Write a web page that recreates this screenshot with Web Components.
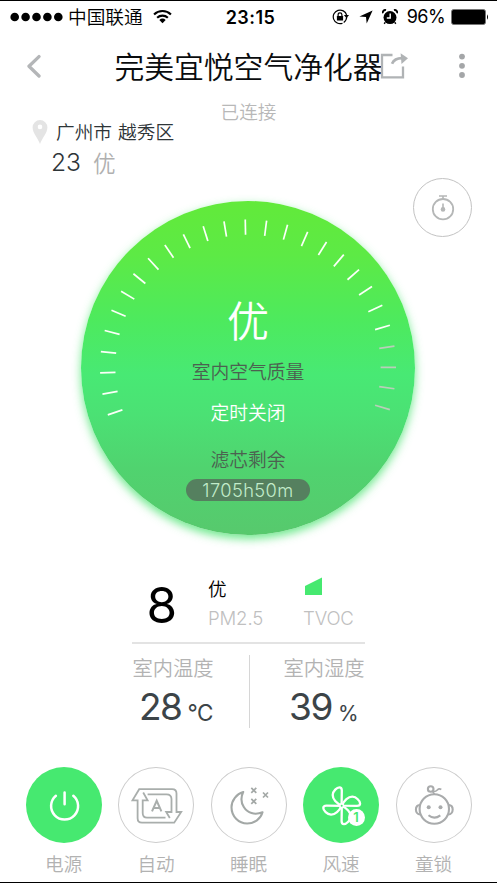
<!DOCTYPE html>
<html lang="zh-CN">
<head>
<meta charset="utf-8">
<title>完美宜悦空气净化器</title>
<style>
html,body{margin:0;padding:0;background:#fff}
body{font-family:Inter,"Noto Sans CJK SC",sans-serif;font-weight:350;width:497px;height:883px;overflow:hidden}
</style>
</head>
<body>
<purifier-app></purifier-app>
<script>
const define = (name, html, after) => {
  const tpl = document.createElement('template');
  tpl.innerHTML = '<style>*{box-sizing:border-box}svg{display:block;flex:none}</style>' + html;
  customElements.define(name, class extends HTMLElement {
    connectedCallback() {
      if (this.shadowRoot) return;
      this.attachShadow({mode: 'open'}).append(tpl.content.cloneNode(true));
      if (after) after(this, this.shadowRoot);
    }
  });
};

define('status-bar', `
<style>
:host{display:grid;grid-template-columns:1fr auto 1fr;align-items:center;height:33px;border-top:1px solid #000;padding:0 8px 0 10px;color:#000}
.l,.r{display:flex;align-items:center}
.r{justify-content:flex-end}
.c{font-size:18.7px;line-height:24px;white-space:nowrap;margin:1px 0 0 5px}
.t{font-size:18px;font-weight:600;letter-spacing:.45px;line-height:24px;margin:1px 0 0 2px}
.p{font-size:18px;line-height:24px;letter-spacing:-.6px;font-weight:400}
</style>
<div class="l">
<svg width="53" height="10" viewBox="0 0 53 10"><g fill="#000"><circle cx="4.700" cy="5" r="4.300"/><circle cx="15.600" cy="5" r="4.300"/><circle cx="26.500" cy="5" r="4.300"/><circle cx="37.400" cy="5" r="4.300"/><circle cx="48.300" cy="5" r="4.300"/></g></svg>
<span class="c">中国联通</span>
<svg style="margin:-2px 0 0 10px" width="19" height="15" viewBox="0 0 20 16" fill="none" stroke="#000" stroke-width="2.300"><path d="M1 5.800a13 13 0 0 1 18 0M4.300 9.300a8.300 8.300 0 0 1 11.400 0"/><path d="M10 15.200L6.600 11.700a5 5 0 0 1 6.800 0z" fill="#000" stroke="none"/></svg>
</div>
<span class="t">23:15</span>
<div class="r">
<svg width="17" height="16" viewBox="0 0 17 16"><path d="M10.500 14.200A6.800 6.800 0 1 1 14.600 6" fill="none" stroke="#000" stroke-width="1.200"/><path d="M14.700 8a6.800 6.800 0 0 1-3 5.400" fill="none" stroke="#000" stroke-width="1.200"/><path d="M11.900 6h5.100l-2.500 3.300z"/><rect x="4.900" y="7" width="6.200" height="4.600" rx=".5"/><path d="M6.100 7.400V5.800a1.900 1.900 0 0 1 3.800 0v1.600" fill="none" stroke="#000" stroke-width="1.200"/></svg>
<svg style="margin-left:10px" width="14" height="14" viewBox="0 0 14 14"><path d="M13.600.4L7.700 13.600 7 7 .4 6.400z"/></svg>
<svg style="margin-left:9px" width="16" height="16" viewBox="0 0 16 16"><circle cx="8" cy="8.600" r="6.500"/><path d="M.9 4.200A2.400 2.400 0 0 1 4 1.200M15.100 4.200A2.400 2.400 0 0 0 12 1.200" fill="none" stroke="#000" stroke-width="1.800"/><path d="M3.200 13.400l-1 1.300M12.800 13.400l1 1.300" stroke="#000" stroke-width="1.500"/><path d="M8.200 4.600V9H4.800" stroke="#fff" stroke-width="1.400" fill="none"/></svg>
<span class="p" style="margin-left:9px">96%</span>
<svg style="margin-left:6px" width="38" height="16" viewBox="0 0 38 16"><rect x=".5" y=".5" width="34" height="15" rx="2.200" fill="#000" stroke="#777"/><path d="M36 5.200q2 2.800 0 5.600z"/></svg>
</div>`);

define('nav-bar', `
<style>
:host{display:grid;grid-template-columns:1fr;height:66px;align-items:center;color:#0a0c0e}
h1{grid-area:1/1;margin:1px 0 0;text-align:center;font-size:29.8px;line-height:40px;font-weight:350;white-space:nowrap}
.i{grid-area:1/1;display:flex;align-items:center;justify-content:space-between;padding:0 31px 0 26px}
.g{display:flex;align-items:center;gap:49px}
</style>
<h1><slot></slot></h1>
<div class="i">
<svg width="16" height="24" viewBox="0 0 16 24"><path d="M13 2.600L3 12.300l10 9.700" fill="none" stroke="#b4b6b8" stroke-width="3.300" stroke-linecap="round" stroke-linejoin="round"/></svg>
<div class="g">
<svg width="29" height="26" viewBox="0 0 29 26" fill="none" stroke="#b0b3b5" stroke-width="2.300"><path d="M12.500 2H2v22.400h21V13.500"/><path d="M12 10.800C13.500 7.500 17 5.200 22 5.200" stroke-width="2.700"/><path d="M20.600.2L28 5.200l-6.500 5.800z" fill="#b0b3b5" stroke="none"/></svg>
<svg width="8" height="26" viewBox="0 0 8 26" fill="#a4a6a8"><circle cx="4" cy="3.600" r="2.900"/><circle cx="4" cy="12.800" r="2.900"/><circle cx="4" cy="22" r="2.900"/></svg>
</div></div>`);

define('location-info', `
<style>
:host{display:block;color:#2e3538}
.s{text-align:center;color:#b8b8b8;font-size:18.6px;line-height:24px}
.p{display:flex;align-items:center;padding-left:32px;height:24px;margin-top:-4px}
.p span{font-size:18.7px;line-height:24px;margin:1px 0 0 8px;word-spacing:.8px}
.q{display:flex;align-items:center;padding-left:51px;height:32px;margin-top:2px;font-size:24.6px}
.q b{font-weight:350}
.q i{font-style:normal;color:#b0b0b0;font-size:22.6px;margin-left:12px}
</style>
<div class="s">已连接</div>
<div class="p"><svg width="16" height="24" viewBox="0 0 16 24"><path fill-rule="evenodd" d="M8 24C6.200 18.500.6 13 .6 7.500A7.400 7.400 0 0 1 15.400 7.500C15.400 13 9.800 18.500 8 24zM8 4.600a2.300 2.300 0 1 0 0 4.600a2.300 2.300 0 0 0 0-4.600z" fill="#e4e4e4"/></svg><span>广州市 越秀区</span></div>
<div class="q"><b>23</b><i>优</i></div>`);

define('timer-button', `
<style>:host{display:grid;place-items:center;width:59px;height:59px;border:1.2px solid #c3c3c3;border-radius:50%;background:#fff}</style>
<svg width="24" height="26" viewBox="0 0 24 26" fill="none" stroke="#b5b7b7" stroke-width="1.800"><circle cx="12" cy="14.200" r="10.200"/><path d="M8 1h8M12 1v3M12 8.500v6" stroke-width="1.600"/><circle cx="12" cy="14.400" r="2.300" fill="#b5b7b7" stroke="none"/></svg>`);

define('air-dial', `
<style>
:host{display:grid;width:334px;height:334px;border-radius:50%;background:linear-gradient(180deg,#62ea3a 0%,#5dea45 16%,#4dea5e 36%,#48e974 52%,#4be174 64%,#50d36f 80%,#57c96d 100%);box-shadow:0 4px 10px rgba(75,228,112,.8)}
.k,.t{grid-area:1/1}
.t{display:flex;flex-direction:column;align-items:center;white-space:nowrap;color:#fff;font-size:18.8px;line-height:26px;padding-top:92px}
.g{font-size:42px;line-height:58px}
.d{color:#4c6150}
.v{width:124px;height:22px;border-radius:11px;background:#55805f;color:#c2ecca;font-size:18.3px;line-height:22px;text-align:center;letter-spacing:.4px}
</style>
<svg class="k" width="334" height="334" viewBox="0 0 334 334"></svg>
<div class="t"><div class="g">优</div><div class="d" style="margin-top:9px">室内空气质量</div><div style="margin-top:15px">定时关闭</div><div class="d" style="margin-top:21px">滤芯剩余</div><div class="v" style="margin-top:5px">1705h50m</div></div>`,
(el, root) => {
  const svg = root.querySelector('.k');
  for (let i = 0; i < 27; i++) {
    const l = document.createElementNS('http://www.w3.org/2000/svg', 'line');
    const a = (-198.7 + i * 8.28) * Math.PI / 180, x = Math.cos(a), y = Math.sin(a);
    l.setAttribute('x1', 167 + 132.6 * x); l.setAttribute('y1', 166.4 + 132.6 * y);
    l.setAttribute('x2', 167 + 148 * x); l.setAttribute('y2', 166.4 + 148 * y);
    l.setAttribute('stroke', i < 23 ? '#fbfff8' : '#b9ceb9');
    l.setAttribute('stroke-width', '1.7');
    svg.append(l);
  }
});

define('air-readings', `
<style>
:host{display:flex;width:233px;height:67px;border-bottom:2px solid #e3e3e3;color:#000}
.n{width:76px;padding-left:14.5px;font-size:49.5px;line-height:56px;font-weight:400}
.c{font-size:18.6px;line-height:26px;color:#c0c0c0;letter-spacing:-.15px}
.c p{margin:0;height:26px}
.c .b{color:#000;line-height:25px}
</style>
<div class="n">8</div>
<div class="c" style="width:95px"><p class="b">优</p><p style="margin-top:2px">PM2.5</p></div>
<div class="c"><p><svg width="19" height="19" viewBox="0 0 19 19"><path d="M2 9L19 .6v17.400H2z" fill="#46e970"/></svg></p><p style="margin-top:2px">TVOC</p></div>`);

define('climate-value', `
<style>
:host{display:flex;flex-direction:column;align-items:center;width:84px;color:#3c4448}
.l{font-size:20.3px;line-height:28px;color:#b3b3b3;white-space:nowrap}
.v{display:flex;align-items:baseline;font-size:37px;line-height:44px;margin:2px 0 0 6px;letter-spacing:-1.4px;white-space:nowrap;font-weight:380}
.v small{font-size:22.5px;margin-left:6px;letter-spacing:-.5px;position:relative;top:1px}
:host([unit="%"]) .v{margin-left:-1px}
:host([unit="%"]) small{font-size:21px}
</style>
<div class="l"><slot></slot></div><div class="v"><span></span><small></small></div>`,
(el, r) => { r.querySelector('span').textContent = el.getAttribute('value'); r.querySelector('small').textContent = el.getAttribute('unit'); });

const blade = 'M38.600 38.300C33.500 36.500 29.600 32 29.700 28C29.900 24 34 20.300 36.400 20.300Q38.800 20.300 38.800 23.500z';
const icons = {
  power: '<g stroke="#fff" stroke-width="2.500" stroke-linecap="round"><path d="M29.900 28.700a13.500 13.500 0 1 0 17.400 0M38.600 25.600v11.600"/></g>',
  auto: '<g stroke="#a9aeac" stroke-width="1.800" stroke-linejoin="miter"><path d="M19.600 33.300H14.500L21.200 22.200H54.100Q58.500 22.200 58.500 26.600V45H63.200L56.200 55.700H24Q19.600 55.700 19.600 51.300z"/><path d="M29.600 27.300H48.500Q53.500 27.300 53.500 32V45H48.200L51.800 51M25.200 25.500L29.600 33.300H24.700V46Q24.700 50.700 29 50.700H47.500"/><path d="M34 44.300L38.700 33.800L43.400 44.300M35.700 41h6" stroke-width="2"/></g>',
  sleep: '<g stroke="#a3a8a6" stroke-width="2.100" stroke-linejoin="round"><path d="M32.200 25C25.500 27 20.500 33.300 20.500 40.300C20.500 49.300 27.500 56.500 36.200 56.500C43.500 56.500 49.700 52 51.500 45.300C43.500 48.500 36.500 46 32.800 40C30 35.500 29.800 30 32.200 25z"/><path stroke-width="1.700" d="M40.300 20.800l5 5m0-5l-5 5M52 25.500l5 5m0-5l-5 5M40.300 31.800l5 5m0-5l-5 5"/></g>',
  fan: '<g stroke="#fff" stroke-width="2.300" stroke-linejoin="round">' + [0, 90, 180, 270].map(a => `<path transform="rotate(${a} 38.7 38.7)" d="${blade}"/>`).join('') + '</g><circle cx="38.700" cy="38.700" r="2.400" fill="#fff"/><circle cx="38.700" cy="38.700" r="1" fill="#46e970"/>',
  child: '<g stroke="#a9abac" stroke-width="2.100"><circle cx="38.300" cy="42" r="14.700"/><path d="M24 38C18.500 37.500 18.500 47.500 24.300 47.500M52.600 38C58.100 37.500 58.100 47.500 52.300 47.500M32.500 48.300Q38.300 53 44.300 48.300"/><circle cx="34.700" cy="22" r="2.800"/><path d="M36.500 24.300Q39.500 25 41.300 23T45.300 22.500M36.500 24.500Q38 26 38.500 27.500" stroke-width="1.700"/></g><circle cx="32.700" cy="40.200" r="2" fill="#a9abac"/><circle cx="44.500" cy="40.200" r="2" fill="#a9abac"/>'
};
define('mode-button', `
<style>
:host{display:flex;flex-direction:column;align-items:center;width:76px;color:#b2b2b2;font-size:18.6px;line-height:26px}
.o{position:relative;width:76px;height:76px;border-radius:50%;box-shadow:inset 0 0 0 1px #ccc}
:host([on]) .o{background:#46e970;box-shadow:none}
.l{margin-top:8px}
.n{position:absolute;left:44.5px;top:42px;width:17px;height:17px;border-radius:50%;background:#fff;color:#46e970;font-size:13px;line-height:17px;text-align:center;font-weight:600}
</style>
<div class="o"><svg width="76" height="76" viewBox="0 0 76 76" fill="none"></svg></div><div class="l"><slot></slot></div>`,
(el, r) => {
  r.querySelector('svg').innerHTML = icons[el.getAttribute('icon')];
  if (el.hasAttribute('level')) {
    const n = document.createElement('span');
    n.className = 'n'; n.textContent = el.getAttribute('level');
    r.querySelector('.o').append(n);
  }
});

define('purifier-app', `
<style>
:host{display:flex;flex-direction:column;box-sizing:border-box;width:497px;height:883px;background:#fff;border-bottom:1px solid #000;overflow:hidden}
location-info{margin-top:1px;flex:none}
status-bar,nav-bar{flex:none;box-sizing:border-box}
timer-button{align-self:flex-end;box-sizing:border-box;margin:0 25px 0 0;flex:none}
air-dial{margin:-36px 0 0 81px;flex:none}
air-readings{box-sizing:border-box;margin:42px 0 0 132px;flex:none}
.c{display:flex;margin:11px 0 0 131px;flex:none}
.c hr{width:1px;height:73px;border:0;background:#d6d6d6;margin:0 32.5px 0 33.5px}
.m{display:flex;gap:16.5px;margin:32px 0 0 25.5px;flex:none}
</style>
<status-bar></status-bar>
<nav-bar>完美宜悦空气净化器</nav-bar>
<location-info></location-info>
<timer-button></timer-button>
<air-dial></air-dial>
<air-readings></air-readings>
<div class="c"><climate-value value="28" unit="°C">室内温度</climate-value><hr><climate-value value="39" unit="%">室内湿度</climate-value></div>
<div class="m"><mode-button on icon="power">电源</mode-button><mode-button icon="auto">自动</mode-button><mode-button icon="sleep">睡眠</mode-button><mode-button on icon="fan" level="1">风速</mode-button><mode-button icon="child">童锁</mode-button></div>`);
</script>
</body>
</html>
